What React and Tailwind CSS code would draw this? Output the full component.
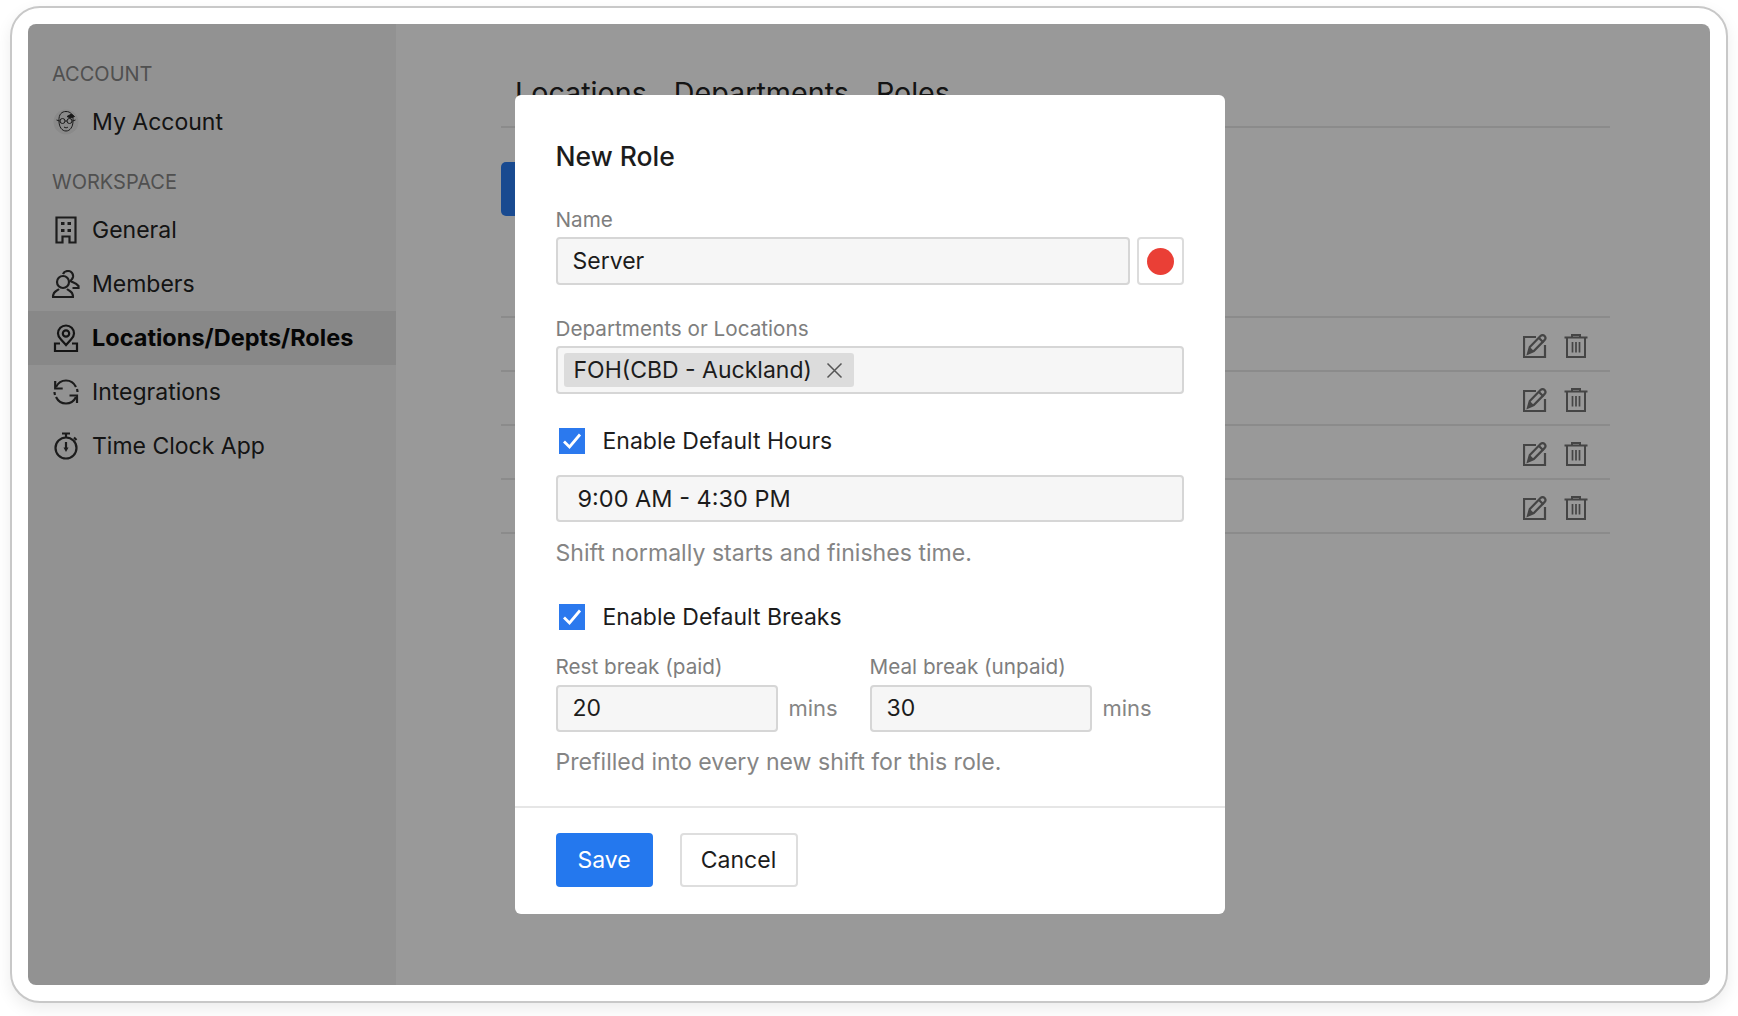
const FONT = "font-['Inter','Noto_Sans',sans-serif]";

const Avatar = () => (
  <svg width="26" height="26" viewBox="0 0 26 26" fill="none" stroke="#2a2a2a" strokeWidth="1">
    <circle cx="13" cy="13" r="12.5" fill="#e6e6e6" stroke="none" />
    <path d="M6 12C5.500 5 9 2.500 13 2.500c4.500 0 7.500 3 7 9.500" />
    <path d="M6 12c0 6 3 10 7 10s7-4 7-10" />
    <circle cx="9.500" cy="12" r="2.500" />
    <circle cx="16.500" cy="12" r="2.500" />
    <path d="M12 12h2M3.500 11l3 1M19.500 12l3-1M11 18c1.500 1 3 1 4 0" />
    <path d="M14 7.500l4.500-2.500 3 2.500-4 1.500z" fill="#2a2a2a" />
  </svg>
);
const Building = () => (
  <svg width="24" height="28" viewBox="0 0 24 28" fill="none" stroke="#2f2f2f" strokeWidth="2.200">
    <path d="M2.500 1.500h19v25h-6v-6h-7v6h-6z" />
    <path fill="#2f2f2f" stroke="none" d="M7 6h3.500v3H7zM13.500 6H17v3h-3.500zM7 13h3.500v3H7zM13.500 13H17v3h-3.500z" />
  </svg>
);
const Members = () => (
  <svg width="30" height="28" viewBox="0 0 30 28" fill="none" stroke="#2f2f2f" strokeWidth="2.200">
    <circle cx="12" cy="12" r="6" />
    <path d="M2 27c0-1 0-2 1-4 1.500-2 4-3 5-4M22 27c0-1 0-2-1-4-1.500-2-4-3-5-4M1 27h22" />
    <path d="M12 4c1-2.500 3-3 5-3 3.500 0 5.500 3 5 6-.4 2-1.500 3-2.500 4 1.500 1.500 5 1.500 8 5v2h-6" />
  </svg>
);
const Pin = () => (
  <svg width="26" height="28" viewBox="0 0 26 28" fill="none" stroke="#222" strokeWidth="2.200">
    <path d="M13 21l-5-5.500C6 13.500 5 11.500 5 9.500 5 5 8.500 1.500 13 1.500S21 5 21 9.500c0 2-1 4-3 6z" />
    <circle cx="13" cy="9.500" r="3.200" />
    <path d="M7 19.500H2v7.500h22v-7.500h-5" />
  </svg>
);
const Sync = () => (
  <svg width="26" height="26" viewBox="0 0 26 26" fill="none" stroke="#2f2f2f" strokeWidth="2.200">
    <path d="M3 8C5 4 8.500 1.500 13 1.500c4 0 8 2.500 10 6.500M23 18c-2 4-5.500 6.500-10 6.500-4 0-8-2.500-10-6.500M1.500 13c0 1 .2 2 .5 3M24.500 13c0-1-.2-2-.5-3" />
    <path d="M2.200 2v7.500h7.500M24 24v-7.500h-7.500" strokeLinejoin="miter" />
  </svg>
);
const Timer = () => (
  <svg width="24" height="28" viewBox="0 0 24 28" fill="none" stroke="#2f2f2f" strokeWidth="2.200">
    <circle cx="12" cy="16" r="10.500" />
    <path d="M8 1.500h8M12 1.500v4M20 5.500l2.500 2.500" />
    <path d="M12 10v7" />
    <path d="M9.500 15.500L12 20l2.500-4.500z" fill="#2f2f2f" stroke="none" />
  </svg>
);
const Edit = () => (
  <svg width="24" height="24" viewBox="0 0 24 24" fill="none" stroke="#737373" strokeWidth="2.200">
    <path d="M13 3H1v20h21V11" />
    <path d="M5 19.500l1.800-6.500L17.500 2c1.200-1.200 3-1.200 4.100 0 1.100 1.200 1 3-.1 4.100L10.800 17z" />
    <path d="M5 19.500l1.800-6.500 4 4z" fill="#737373" stroke="none" />
    <path d="M16 4l4.500 4.500" />
  </svg>
);
const Trash = () => (
  <svg width="24" height="24" viewBox="0 0 24 24" fill="none" stroke="#737373" strokeWidth="2">
    <path d="M.5 3.500h23M3 3.500v19.500h18V3.500M8 3V1h8v2" />
    <path d="M8.500 8v10.500M12 8v10.500M15.500 8v10.500" strokeWidth="1.700" />
  </svg>
);
const Check = () => (
  <span className="flex h-[26px] w-[26px] items-center justify-center bg-[#2b79ee]">
    <svg width="20" height="18" viewBox="0 0 20 18" fill="none" stroke="#fff" strokeWidth="2.800">
      <path d="M2 9.500l5.500 5.500L18 2.500" />
    </svg>
  </span>
);

const NavRow = ({ icon, label, active }) => (
  <div className={`flex h-[54px] items-center ${active ? "bg-[#e3e3e3] text-[23.500px] font-bold text-[#0a0a0a]" : "text-[23px] text-[#222]"}`}>
    <span className="flex w-[64px] shrink-0 justify-center pl-[11px]">{icon}</span>
    <span>{label}</span>
  </div>
);

const SectionLabel = ({ children, className }) => (
  <div className={`flex h-[30px] items-center pl-[24px] text-[20px] text-[#858585] ${className}`}>{children}</div>
);

const Row = () => (
  <div className="flex h-[54px] items-center justify-end gap-[17px] border-b-2 border-[#e8e8e8] pr-[22px] pt-[4px]">
    <Edit />
    <Trash />
  </div>
);

const Field = ({ children, className }) => (
  <div className={`flex h-[47px] items-center rounded-[4px] border-2 border-[#d6d6d6] bg-[#f6f6f6] text-[#1c1c1c] ${className}`}>
    {children}
  </div>
);

const Label = ({ children, className }) => (
  <div className={`flex h-[24px] items-center text-[20.700px] text-[#7e7e7e] ${className}`}>{children}</div>
);

const Help = ({ children, className }) => (
  <div className={`flex h-[28px] items-center text-[23.100px] text-[#858585] ${className}`}>{children}</div>
);

const CheckRow = ({ children, className }) => (
  <div className={`flex h-[26px] items-center pl-[3px] ${className}`}>
    <Check />
    <span className="ml-[18px] text-[23px] text-[#1c1c1c]">{children}</span>
  </div>
);

const BreakField = ({ label, value }) => (
  <div className="w-[315px]">
    <Label>{label}</Label>
    <div className="mt-[6px] flex items-center">
      <Field className="w-[222px] pl-[15px] text-[23px]">{value}</Field>
      <span className="ml-[11px] text-[22px] text-[#858585]">mins</span>
    </div>
  </div>
);

export default function App() {
  return (
    <div className={`h-[1016px] w-full overflow-hidden bg-white pl-[10px] pt-[6px] ${FONT}`}>
      <div className="h-[997px] w-[1718px] rounded-[30px] border-2 border-[#c8c8c8] bg-white p-[16px] shadow-[0_6px_16px_rgba(0,0,0,0.08)]">
        <div className="relative flex h-full w-full overflow-hidden rounded-[8px] bg-white">
          <aside className="h-full w-[368px] shrink-0 bg-[#f4f4f4] pt-[35px]">
            <SectionLabel>ACCOUNT</SectionLabel>
            <div className="mt-[6px]">
              <NavRow icon={<Avatar />} label="My Account" />
            </div>
            <SectionLabel className="mt-[18px]">WORKSPACE</SectionLabel>
            <div className="mt-[6px]">
              <NavRow icon={<Building />} label="General" />
              <NavRow icon={<Members />} label="Members" />
              <NavRow icon={<Pin />} label="Locations/Depts/Roles" active />
              <NavRow icon={<Sync />} label="Integrations" />
              <NavRow icon={<Timer />} label="Time Clock App" />
            </div>
          </aside>
          <main className="h-full flex-1 pl-[105px] pt-[52px]">
            <div className="w-[1109px]">
              <div className="flex h-[52px] gap-[27px] border-b-2 border-[#e8e8e8] pl-[14px] text-[28.700px] leading-[34px] text-[#222]">
                <span>Locations</span>
                <span>Departments</span>
                <span>Roles</span>
              </div>
              <button className="mt-[34px] block h-[54px] w-[140px] rounded-[5px] bg-[#2b7cf0]" />
              <div className="mt-[100px] border-t-2 border-[#e8e8e8]">
                <Row />
                <Row />
                <Row />
                <Row />
              </div>
            </div>
          </main>

          <div className="absolute inset-0 flex justify-center bg-black/40 pl-[1px] pt-[71px]">
            <div className="h-[819px] w-[710px] rounded-[6px] bg-white">
              <div className="flex h-[90px] items-end px-[41px] pb-[8px] text-[26.500px] font-medium text-[#1c1c1c]">New Role</div>
              <div className="px-[41px]">
                <Label className="mt-[23px]">Name</Label>
                <div className="mt-[5px] flex gap-[7px]">
                  <Field className="!h-[48px] w-[574px] pl-[15px] text-[23px]">Server</Field>
                  <div className="flex h-[48px] w-[47px] items-center justify-center rounded-[4px] border-2 border-[#dcdcdc] bg-white">
                    <span className="h-[27px] w-[27px] rounded-full bg-[#ea3f36]" />
                  </div>
                </div>
                <Label className="mt-[32px]">Departments or Locations</Label>
                <Field className="mt-[5px] !h-[48px] pl-[6px]">
                  <span className="flex h-[34px] w-[290px] items-center rounded-[3px] bg-[#dcdcdc] pl-[10px] text-[23px]">
                    FOH(CBD - Auckland)
                    <svg className="ml-[14px]" width="17" height="17" viewBox="0 0 17 17" fill="none" stroke="#555" strokeWidth="1.500">
                      <path d="M1.500 1.500l14 14M15.500 1.500l-14 14" />
                    </svg>
                  </span>
                </Field>
                <CheckRow className="mt-[34px]">Enable Default Hours</CheckRow>
                <Field className="mt-[21px] pl-[20px] text-[23.500px]">9:00 AM - 4:30 PM</Field>
                <Help className="mt-[17px]">Shift normally starts and finishes time.</Help>
                <CheckRow className="mt-[37px]">Enable Default Breaks</CheckRow>
                <div className="mt-[25px] flex">
                  <BreakField label="Rest break (paid)" value="20" />
                  <BreakField label="Meal break (unpaid)" value="30" />
                </div>
                <Help className="mt-[16px]">Prefilled into every new shift for this role.</Help>
              </div>
              <div className="mt-[30px] border-t-2 border-[#e6e6e6] px-[41px] pt-[25px]">
                <div className="flex gap-[27px]">
                  <button className="h-[54px] w-[97px] rounded-[4px] bg-[#2478ee] text-[23px] text-white">Save</button>
                  <button className="h-[54px] w-[118px] rounded-[4px] border-2 border-[#dedede] bg-white text-[23px] text-[#1c1c1c]">Cancel</button>
                </div>
              </div>
            </div>
          </div>
        </div>
      </div>
    </div>
  );
}
